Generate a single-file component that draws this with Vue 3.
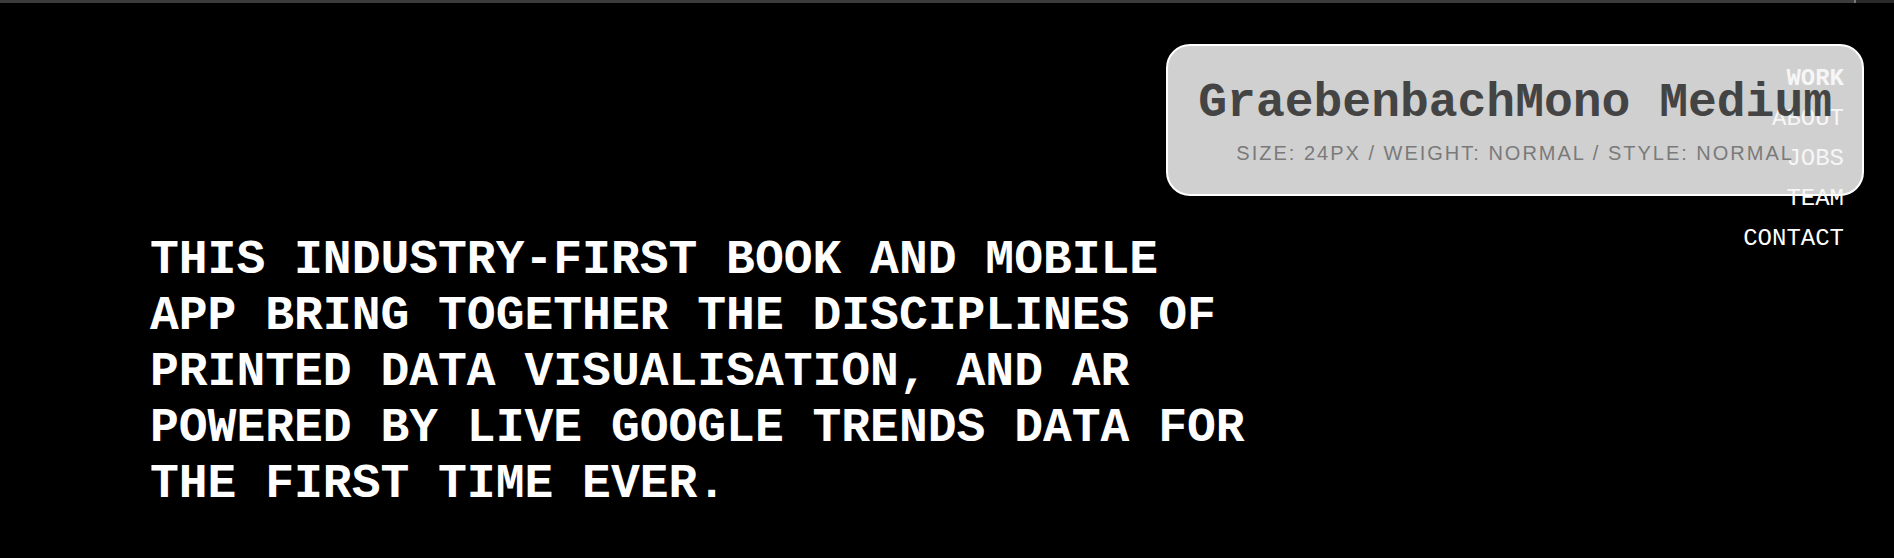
<script setup>
const links = ['Work', 'About', 'Jobs', 'Team', 'Contact']
</script>

<template>
  <div class="page">
    <div class="strip"><span class="strip-main"></span><span class="strip-tick"></span><span class="strip-end"></span></div>
    <div class="content">
      <main class="intro">
        <p>This industry-first book and mobile app bring together the disciplines of printed data visualisation, and AR powered by live Google Trends data for the first time ever.</p>
      </main>
      <nav class="menu" aria-label="Main">
        <a v-for="(link, i) in links" :key="link" href="#" :class="{ active: i === 0 }">{{ link }}</a>
      </nav>
      <aside class="font-card">
        <div class="font-name">GraebenbachMono Medium</div>
        <div class="font-info">Size: 24px / Weight: normal / Style: normal</div>
      </aside>
    </div>
  </div>
</template>

<style>
body {
  background: #000;
}
</style>

<style scoped>
.page {
  min-height: 100vh;
  background: #000;
  color: #fff;
  font-family: "Liberation Mono", monospace;
}
.strip {
  display: flex;
  height: 3px;
}
.strip-main {
  flex: 1;
  background: #3c3c3c;
}
.strip-tick {
  width: 2px;
  background: #777;
}
.strip-end {
  width: 38px;
  background: #2a2a2a;
}
.content {
  position: relative;
  display: flex;
  justify-content: space-between;
  padding: 56px 50px 0 150px;
}
.intro {
  max-width: 1104px;
  padding-top: 173px;
}
.intro p {
  margin: 0;
  font-size: 48px;
  line-height: 56px;
  font-weight: 700;
  text-transform: uppercase;
}
.menu {
  display: flex;
  flex-direction: column;
  align-items: flex-end;
}
.menu a {
  color: #fff;
  font-size: 24px;
  line-height: 40px;
  text-decoration: none;
  text-transform: uppercase;
}
.menu .active {
  font-weight: 700;
}
.font-card {
  position: absolute;
  top: 41px;
  right: 30px;
  box-sizing: border-box;
  padding: 29px 30px 25px;
  border: 2px solid #fff;
  border-radius: 24px;
  background: rgba(245, 245, 245, 0.85);
  text-align: center;
  white-space: nowrap;
}
.font-name {
  color: #444;
  font-size: 48px;
  line-height: 56px;
  font-weight: 700;
}
.font-info {
  margin-top: 6px;
  color: #7a7a7a;
  font-family: "Liberation Sans", Arial, sans-serif;
  font-size: 20px;
  line-height: 32px;
  letter-spacing: 2px;
  text-transform: uppercase;
}
</style>
